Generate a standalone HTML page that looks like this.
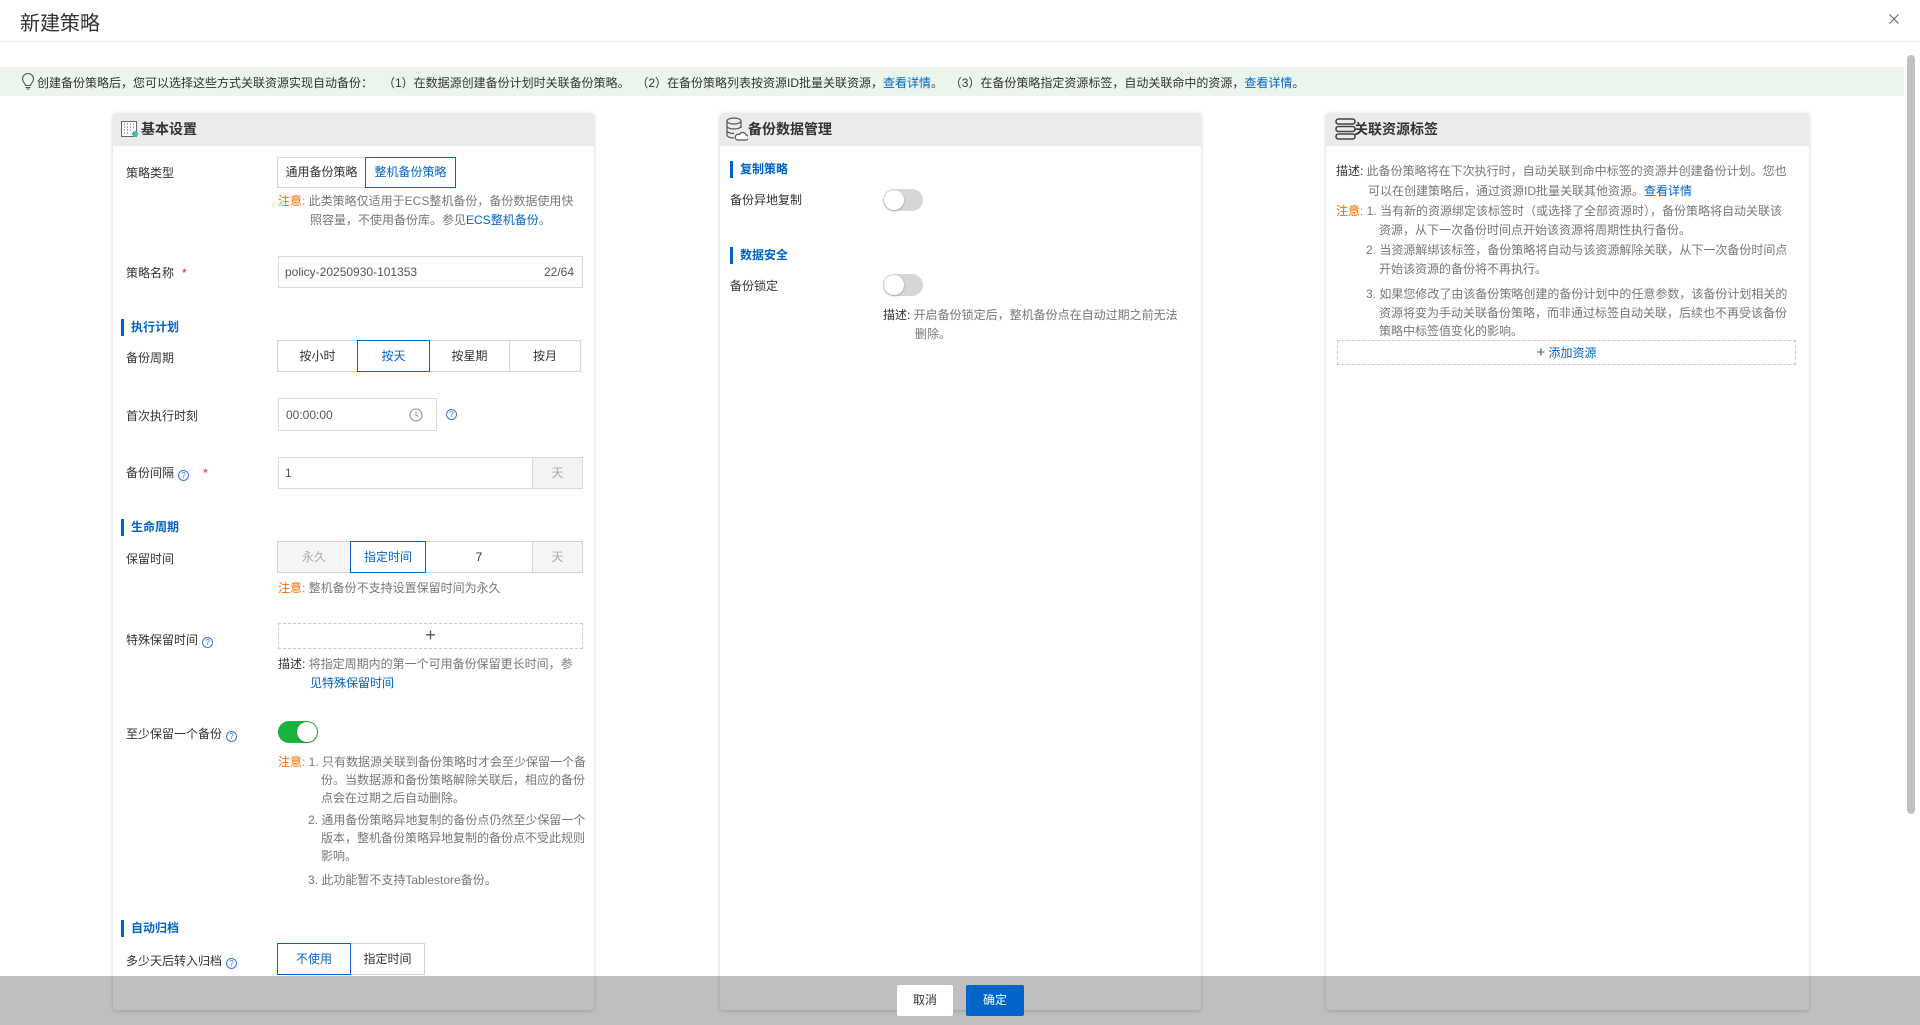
<!DOCTYPE html>
<html><head><meta charset="utf-8"><style>
*{box-sizing:border-box;margin:0;padding:0}
body{width:1920px;height:1025px;overflow:hidden;background:#fff;font-family:"Liberation Sans","Noto Sans CJK SC",sans-serif;font-size:12px;color:#333;position:relative}
.a{position:absolute;white-space:nowrap}
.card{position:absolute;top:113px;height:897px;background:#fff;border-radius:3px;box-shadow:0 1px 4px rgba(0,0,0,.18)}
.card .hd{height:33px;background:#ebebeb;border-radius:3px 3px 0 0;font-size:14px;font-weight:bold;color:#333;line-height:33px;padding-left:28px;position:relative}
.sec{position:absolute;font-weight:bold;color:#0064c8;border-left:3px solid #0064c8;padding-left:7px;line-height:17px;font-size:12px}
.lbl{position:absolute;color:#333;white-space:nowrap}
.box{position:absolute;border:1px solid #d9d9d9;background:#fff}
.seg{position:absolute;display:flex;height:32px}
.seg div{border:1px solid #d3d3d3;margin-left:-1px;text-align:center;line-height:30px;color:#333}
.seg div.on{border-color:#0064c8;color:#0064c8;position:relative;z-index:1}
.seg div.gr{background:#f5f5f5;color:#aaa}
.note{position:absolute;color:#777;line-height:19px;white-space:nowrap}
.o{color:#ff6a00}.b{color:#0064c8}.k{color:#333}
.q{display:inline-block;width:11px;height:11px;border:1px solid #3b7ad0;border-radius:50%;font-size:8px;line-height:9px;text-align:center;color:#3b7ad0;vertical-align:-1px;margin-left:4px}
.req{color:#e02020;margin-left:8px}
.tg{position:absolute;width:40px;height:22px;border-radius:11px;background:#d6d6d6}
.tg:after{content:"";position:absolute;top:1px;left:1px;width:20px;height:20px;border-radius:50%;background:#fff;box-shadow:0 1px 2px rgba(0,0,0,.25)}
.tg.on{background:#1ab33c}.tg.on:after{left:19px}
.dash{position:absolute;border:1px dashed #c8c8c8}
</style></head><body>
<div class="a" style="left:20px;top:7px;font-size:20px;color:#333">新建策略</div>
<svg class="a" style="left:1889px;top:14px" width="10" height="10" viewBox="0 0 10 10"><path d="M0.5 0.5l9 9M9.5 0.5l-9 9" stroke="#666" stroke-width="1.1"/></svg>
<div style="position:absolute;left:0;top:41px;width:1920px;height:1px;background:#eee"></div>
<div style="position:absolute;left:0;top:67px;width:1904px;height:29px;background:#eaf6ec"></div>
<svg class="a" style="left:21px;top:73px" width="14" height="17" viewBox="0 0 14 17"><path d="M4.5 12.5C4.5 10.5 1.5 9 1.5 6a5.5 5.5 0 0 1 11 0c0 3-3 4.5-3 6.5z M4.5 14.5h5 M5.5 16h3" fill="none" stroke="#555" stroke-width="1.1"/></svg>
<div class="a" style="left:37px;top:74px;color:#333">创建备份策略后，您可以选择这些方式关联资源实现自动备份：&nbsp;&nbsp;&nbsp;（1）在数据源创建备份计划时关联备份策略。&nbsp;&nbsp;（2）在备份策略列表按资源ID批量关联资源，<span class="b">查看详情</span>。&nbsp;&nbsp;（3）在备份策略指定资源标签，自动关联命中的资源，<span class="b">查看详情</span>。</div>
<div style="position:absolute;left:1907px;top:55px;width:8px;height:759px;background:#c1c1c1;border-radius:4px"></div>

<!-- card 1 -->
<div class="card" style="left:113px;width:481px">
<div class="hd"><svg style="position:absolute;left:8px;top:8px" width="18" height="17" viewBox="0 0 18 17"><rect x="0.5" y="0.5" width="15" height="15" fill="#fff" stroke="#666"/><path d="M3 3h1M6 3h1M9 3h1M12 3h1M3 6h1M6 6h1M9 6h1M12 6h1M3 9h1M6 9h1M9 9h1M3 12h1M6 12h1" stroke="#777" stroke-width="1.3"/><circle cx="14" cy="13" r="3" fill="#3fc0a0"/></svg>基本设置</div>
</div>
<div class="lbl" style="left:126px;top:164px">策略类型</div>
<div class="seg" style="left:278px;top:157px;height:31px"><div style="width:89px;line-height:29px">通用备份策略</div><div class="on" style="width:91px;line-height:29px">整机备份策略</div></div>
<div class="note" style="left:278px;top:192px"><span class="o">注意:</span> 此类策略仅适用于ECS整机备份，备份数据使用快<br><span style="padding-left:32px">照容量，不使用备份库。参见<span class="b">ECS整机备份</span>。</span></div>
<div class="lbl" style="left:126px;top:264px">策略名称<span class="req">*</span></div>
<div class="box" style="left:278px;top:256px;width:305px;height:32px"><span class="a" style="left:6px;top:8px;color:#555">policy-20250930-101353</span><span class="a" style="right:8px;top:8px;color:#555">22/64</span></div>
<div class="sec" style="left:121px;top:319px">执行计划</div>
<div class="lbl" style="left:126px;top:349px">备份周期</div>
<div class="seg" style="left:278px;top:340px"><div style="width:81px">按小时</div><div class="on" style="width:73px">按天</div><div style="width:81px">按星期</div><div style="width:72px">按月</div></div>
<div class="lbl" style="left:126px;top:407px">首次执行时刻</div>
<div class="box" style="left:278px;top:398px;width:159px;height:33px"><span class="a" style="left:7px;top:9px;color:#555">00:00:00</span><svg class="a" style="left:130px;top:9px" width="14" height="14"><circle cx="7" cy="7" r="6" fill="none" stroke="#888"/><path d="M7 3.5V7l2.5 1.5" fill="none" stroke="#888"/></svg></div>
<span class="q a" style="left:442px;top:409px">?</span>
<div class="lbl" style="left:126px;top:464px">备份间隔<span class="q">?</span><span class="req" style="margin-left:14px">*</span></div>
<div class="box" style="left:278px;top:457px;width:305px;height:32px"><span class="a" style="left:6px;top:8px;color:#555">1</span><div class="a" style="right:0;top:0;width:50px;height:30px;background:#f3f3f3;border-left:1px solid #ddd;text-align:center;line-height:30px;color:#aaa">天</div></div>
<div class="sec" style="left:121px;top:519px">生命周期</div>
<div class="lbl" style="left:126px;top:550px">保留时间</div>
<div class="seg" style="left:278px;top:541px"><div class="gr" style="width:74px">永久</div><div class="on" style="width:76px">指定时间</div><div style="width:108px">7</div><div class="gr" style="width:51px">天</div></div>
<div class="note" style="left:278px;top:579px"><span class="o">注意:</span> 整机备份不支持设置保留时间为永久</div>
<div class="lbl" style="left:126px;top:631px">特殊保留时间<span class="q">?</span></div>
<div class="dash" style="left:278px;top:623px;width:305px;height:26px;text-align:center;line-height:22px;font-size:18px;color:#555">+</div>
<div class="note" style="left:278px;top:655px"><span class="k">描述:</span> 将指定周期内的第一个可用备份保留更长时间，参<br><span style="padding-left:32px" class="b">见特殊保留时间</span></div>
<div class="lbl" style="left:126px;top:725px">至少保留一个备份<span class="q">?</span></div>
<div class="tg on" style="left:278px;top:721px"></div>
<div class="note" style="left:278px;top:753px;line-height:18px"><span class="o">注意:</span> 1. 只有数据源关联到备份策略时才会至少保留一个备<br><span style="padding-left:43px">份。当数据源和备份策略解除关联后，相应的备份</span><br><span style="padding-left:43px">点会在过期之后自动删除。</span></div>
<div class="note" style="left:308px;top:811px;line-height:18px">2. 通用备份策略异地复制的备份点仍然至少保留一个<br><span style="padding-left:13px">版本，整机备份策略异地复制的备份点不受此规则</span><br><span style="padding-left:13px">影响。</span></div>
<div class="note" style="left:308px;top:871px">3. 此功能暂不支持Tablestore备份。</div>
<div class="sec" style="left:121px;top:920px">自动归档</div>
<div class="lbl" style="left:126px;top:952px">多少天后转入归档<span class="q">?</span></div>
<div class="seg" style="left:278px;top:943px"><div class="on" style="width:74px">不使用</div><div style="width:75px">指定时间</div></div>

<!-- card 2 -->
<div class="card" style="left:720px;width:481px">
<div class="hd"><svg style="position:absolute;left:6px;top:4px" width="22" height="25" viewBox="0 0 22 25"><ellipse cx="8" cy="4" rx="7" ry="3" fill="none" stroke="#555" stroke-width="1.2"/><path d="M1 4v14c0 1.7 3 3 7 3M15 4v7M1 9c0 1.7 3 3 7 3s7-1.3 7-3M1 13.5c0 1.7 3 3 7 3" fill="none" stroke="#555" stroke-width="1.2"/><path d="M11 23h9a2.5 2.5 0 0 0 0-5 3.5 3.5 0 0 0-6.5-.5A2.8 2.8 0 0 0 11 23z" fill="#fff" stroke="#555" stroke-width="1.2"/></svg>备份数据管理</div>
</div>
<div class="sec" style="left:730px;top:161px">复制策略</div>
<div class="lbl" style="left:730px;top:191px">备份异地复制</div>
<div class="tg" style="left:883px;top:189px"></div>
<div class="sec" style="left:730px;top:247px">数据安全</div>
<div class="lbl" style="left:730px;top:277px">备份锁定</div>
<div class="tg" style="left:883px;top:274px"></div>
<div class="note" style="left:883px;top:306px"><span class="k">描述:</span> 开启备份锁定后，整机备份点在自动过期之前无法<br><span style="padding-left:32px">删除。</span></div>

<!-- card 3 -->
<div class="card" style="left:1326px;width:483px">
<div class="hd"><svg style="position:absolute;left:9px;top:5px" width="22" height="22" viewBox="0 0 22 22"><rect x="1" y="1" width="19" height="5" rx="2.5" fill="none" stroke="#444" stroke-width="1.6"/><rect x="1" y="8.5" width="19" height="5" rx="2.5" fill="none" stroke="#444" stroke-width="1.6"/><rect x="1" y="16" width="19" height="5" rx="2.5" fill="none" stroke="#444" stroke-width="1.6"/></svg>关联资源标签</div>
</div>
<div class="note" style="left:1336px;top:161px;line-height:20px"><span class="k">描述:</span> 此备份策略将在下次执行时，自动关联到命中标签的资源并创建备份计划。您也<br><span style="padding-left:32px">可以在创建策略后，通过资源ID批量关联其他资源。<span class="b">查看详情</span></span></div>
<div class="note" style="left:1336px;top:202px"><span class="o">注意:</span> 1. 当有新的资源绑定该标签时（或选择了全部资源时），备份策略将自动关联该<br><span style="padding-left:43px">资源，从下一次备份时间点开始该资源将周期性执行备份。</span></div>
<div class="note" style="left:1366px;top:241px">2. 当资源解绑该标签，备份策略将自动与该资源解除关联，从下一次备份时间点<br><span style="padding-left:13px">开始该资源的备份将不再执行。</span></div>
<div class="note" style="left:1366px;top:285px;line-height:18.5px">3. 如果您修改了由该备份策略创建的备份计划中的任意参数，该备份计划相关的<br><span style="padding-left:13px">资源将变为手动关联备份策略，而非通过标签自动关联，后续也不再受该备份</span><br><span style="padding-left:13px">策略中标签值变化的影响。</span></div>
<div class="dash" style="left:1337px;top:340px;width:459px;height:25px;text-align:center;line-height:23px;color:#0064c8"><span style="font-size:15px;color:#555">+</span> 添加资源</div>

<!-- footer overlay -->
<div style="position:absolute;left:0;top:976px;width:1920px;height:49px;background:rgba(0,0,0,.25);z-index:5"></div>
<div style="position:absolute;left:897px;top:985px;width:56px;height:31px;background:#fff;border-radius:2px;z-index:6;text-align:center;line-height:31px;color:#333">取消</div>
<div style="position:absolute;left:966px;top:985px;width:58px;height:31px;background:#0064c8;border-radius:2px;z-index:6;text-align:center;line-height:31px;color:#fff">确定</div>
</body></html>
